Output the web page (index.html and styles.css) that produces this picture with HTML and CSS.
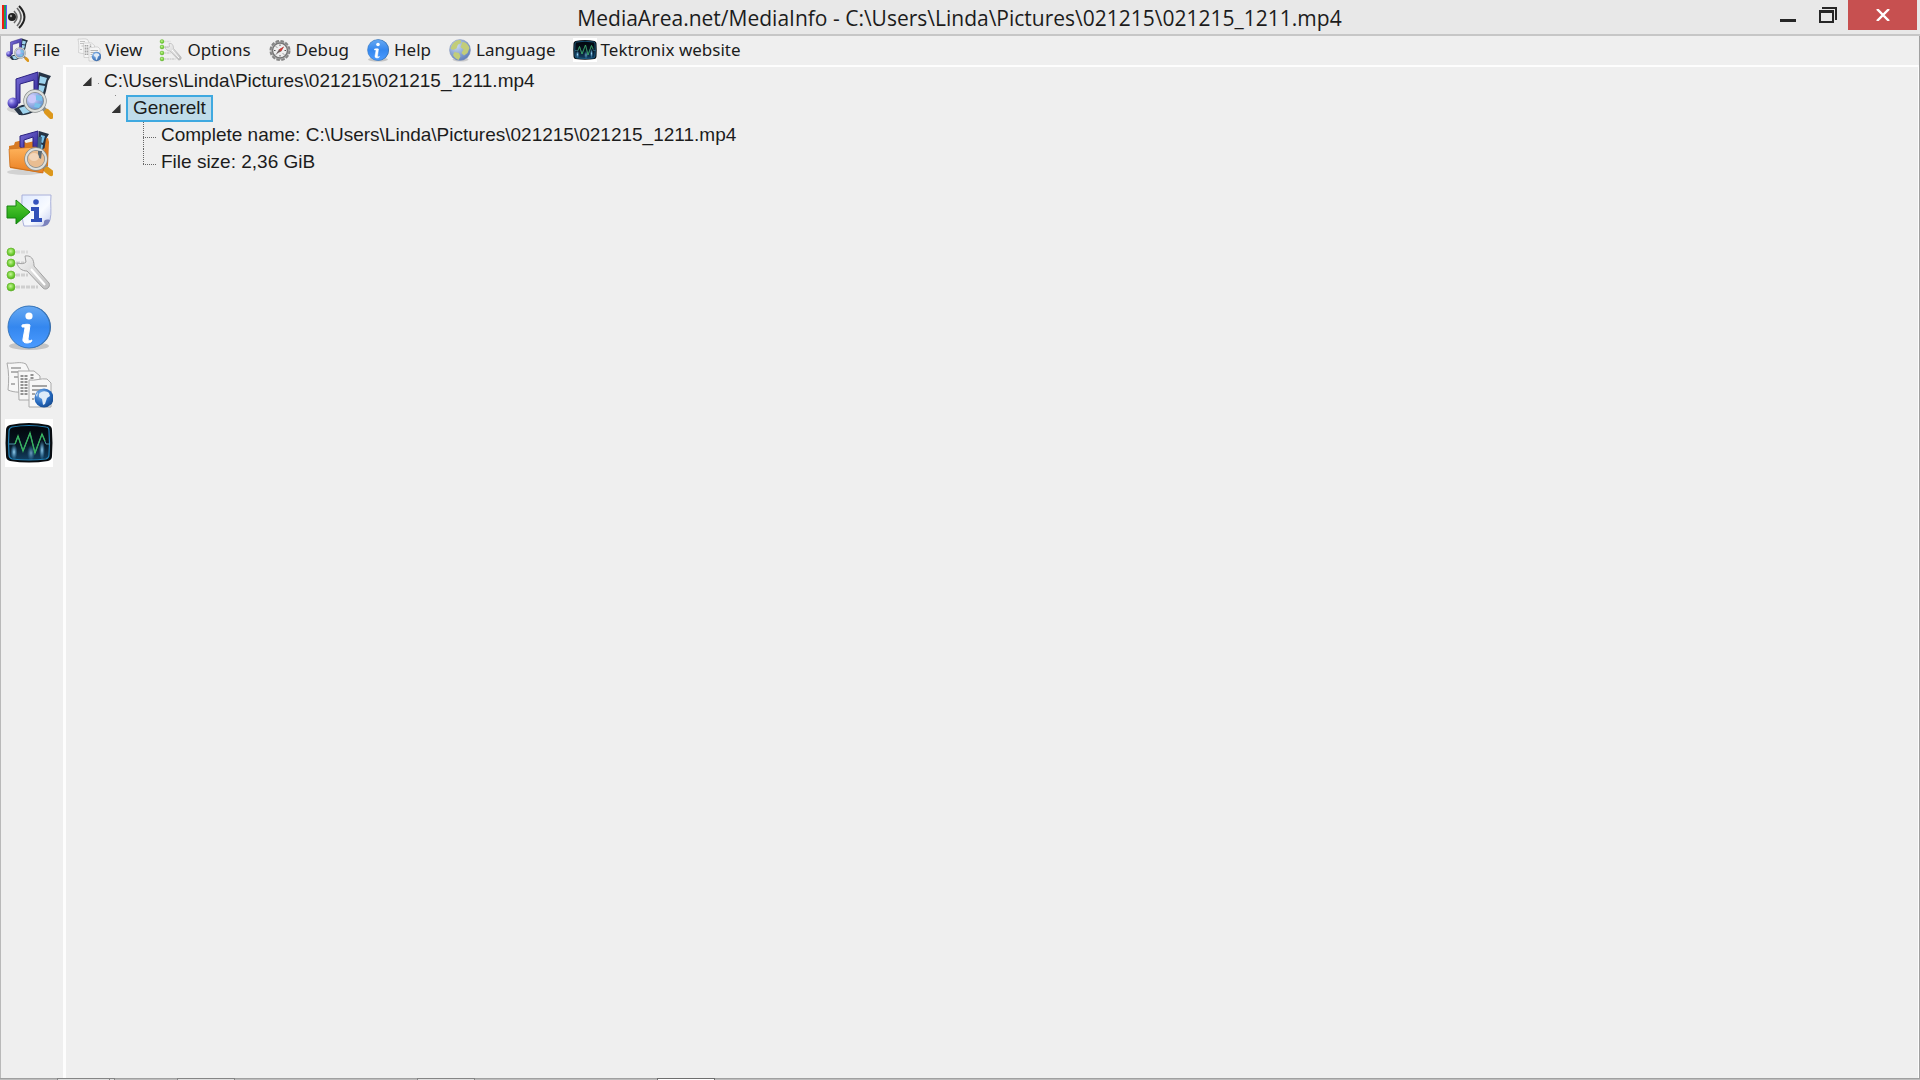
FILE: index.html
```
<!DOCTYPE html>
<html lang="en">
<head>
    <meta charset="UTF-8">
    <meta name="viewport" content="width=device-width, initial-scale=1.0">
    <title>MediaArea.net/MediaInfo</title>
    <link rel="stylesheet" href="styles.css">
</head>
<body>
    <!-- shared icons, used by both the menu and the toolbar -->
    <svg class="sprite" aria-hidden="true">
        <defs>
            <linearGradient id="purple" x1="0" y1="0" x2="1" y2="1">
                <stop offset="0" stop-color="#7b6fd8"/><stop offset="1" stop-color="#2f2694"/>
            </linearGradient>
            <radialGradient id="ball" cx="0.35" cy="0.3" r="0.7">
                <stop offset="0" stop-color="#c9c2ff"/><stop offset="0.5" stop-color="#6558cf"/><stop offset="1" stop-color="#2a2085"/>
            </radialGradient>
            <linearGradient id="orange" x1="0" y1="0" x2="0" y2="1">
                <stop offset="0" stop-color="#ffb45c"/><stop offset="1" stop-color="#ea7f22"/>
            </linearGradient>
            <radialGradient id="lens" cx="0.35" cy="0.35" r="0.75">
                <stop offset="0" stop-color="#dcdcff"/><stop offset="0.5" stop-color="#94a9e2"/><stop offset="1" stop-color="#4c8cc0"/>
            </radialGradient>
            <linearGradient id="green" x1="0" y1="0" x2="0" y2="1">
                <stop offset="0" stop-color="#5bd136"/><stop offset="1" stop-color="#149a0c"/>
            </linearGradient>
            <radialGradient id="dot" cx="0.45" cy="0.4" r="0.65">
                <stop offset="0" stop-color="#caf69c"/><stop offset="0.6" stop-color="#71cf35"/><stop offset="1" stop-color="#4ba51b"/>
            </radialGradient>
            <linearGradient id="steel" x1="0" y1="0" x2="1" y2="1">
                <stop offset="0" stop-color="#f7f7f7"/><stop offset="1" stop-color="#bdbdbd"/>
            </linearGradient>
            <linearGradient id="blue" x1="0" y1="0" x2="0" y2="1">
                <stop offset="0" stop-color="#67a9f2"/><stop offset="0.5" stop-color="#3487ef"/><stop offset="1" stop-color="#4b9bff"/>
            </linearGradient>
            <linearGradient id="page" x1="0" y1="0" x2="1" y2="1">
                <stop offset="0" stop-color="#dfe9ff"/><stop offset="0.6" stop-color="#f8fbff"/><stop offset="1" stop-color="#c4cdef"/>
            </linearGradient>
            <radialGradient id="globe" cx="0.35" cy="0.3" r="0.8">
                <stop offset="0" stop-color="#7db4ee"/><stop offset="0.6" stop-color="#2568bd"/><stop offset="1" stop-color="#144687"/>
            </radialGradient>
            <radialGradient id="earth" cx="0.35" cy="0.3" r="0.8">
                <stop offset="0" stop-color="#c8daf4"/><stop offset="1" stop-color="#5878b5"/>
            </radialGradient>
            <linearGradient id="screen" x1="0" y1="0" x2="0" y2="1">
                <stop offset="0" stop-color="#02060c"/><stop offset="0.5" stop-color="#06131f"/><stop offset="1" stop-color="#123f61"/>
            </linearGradient>
            <radialGradient id="glow">
                <stop offset="0" stop-color="#9bd4f2"/><stop offset="1" stop-color="#3f9bd6" stop-opacity="0"/>
            </radialGradient>
        </defs>

        <symbol id="icon-file" viewBox="0 0 48 48">
            <ellipse cx="15" cy="38" rx="13" ry="4" fill="#000" opacity="0.12"/>
            <path d="M34 1l12 4-3 5-2 10-3 10c-5 11-15 15-24 14l-5-6 8-4c7 0 12-4 13-10z" fill="#263445"/>
            <path d="M35 5l7 2-2 6-6-1zM34 14l6 1-2 7-5-1zM14 37l7-2 4 6-7 2z" fill="#9fd4ee"/>
            <path d="M11 8l22-7v22h-4V9l-14 4v19h-4z" fill="url(#purple)" stroke="#2a2180"/>
            <circle cx="8" cy="32" r="5.5" fill="url(#ball)"/>
            <path d="M38 37l4 4" stroke="#8b8b86" stroke-width="4"/>
            <path d="M42 41l4 4" stroke="#dc971b" stroke-width="6" stroke-linecap="round"/>
            <circle cx="30" cy="30" r="10" fill="url(#lens)" stroke="#858988" stroke-width="3.4"/>
            <circle cx="30" cy="30" r="10" fill="none" stroke="#dde0de" stroke-width="2"/>
            <path d="M31 24l6 1v5l-6-1zM30 32l6 1-2 4-5-1z" fill="#79c2ea"/>
            <circle cx="27" cy="28" r="4" fill="#cac8fa"/>
        </symbol>

        <symbol id="icon-folder" viewBox="0 0 48 48">
            <ellipse cx="20" cy="43" rx="18" ry="3" fill="#000" opacity="0.12"/>
            <path d="M4 17l5-1 1-3 8-2 3 3 22-5 1 4-1 24-6 7-32-5z" fill="#d77a22"/>
            <path d="M15 18V7l18-5v18h-5V8l-9 3v9z" fill="url(#purple)" stroke="#2a2180"/>
            <path d="M34 2l10 3-3 5-3 19-6-2z" fill="#263445"/>
            <path d="M36 6l4 1-2 7-3-1zM35 15l3 1-1 6-3-1z" fill="#79c2ea"/>
            <path d="M4 20l27-2 5 4 4-3-2 25-33-6z" fill="url(#orange)" stroke="#c76b18" stroke-width="0.7"/>
            <path d="M33 8h4l-2 18h-3z" fill="#42657f"/>
            <path d="M39 37l4 4" stroke="#8b8b86" stroke-width="4"/>
            <path d="M42 41l4 3" stroke="#dc971b" stroke-width="6" stroke-linecap="round"/>
            <circle cx="31" cy="30" r="10" fill="#e9bd91" stroke="#858988" stroke-width="3.4"/>
            <circle cx="31" cy="30" r="10" fill="none" stroke="#dde0de" stroke-width="2"/>
            <path d="M33 22h4l-1 8-3-2z" fill="#596873"/>
            <ellipse cx="29" cy="28" rx="5" ry="4" fill="#f3d6ba"/>
        </symbol>

        <symbol id="icon-export" viewBox="0 0 48 48">
            <path d="M17 8h29c-1 9 1 18-1 25-2 4-5 6-9 6H19c-3-10-2-20-2-31z" fill="url(#page)" stroke="#a9b0da"/>
            <path d="M45 33c-4-1-6 0-6 2 0 2-1 4-4 4 6 1 9-1 10-6z" fill="#7c83bd"/>
            <path d="M2 19h9v-6l14 12-14 12v-6H2z" fill="url(#green)" stroke="#168211"/>
            <circle cx="31" cy="15" r="2.8" fill="#3553bd"/>
            <path d="M26 20h8v11h3v4H26v-3h3v-8h-3z" fill="#3150b9"/>
        </symbol>

        <symbol id="icon-options" viewBox="0 0 48 48">
            <g stroke="#cfcfcf" stroke-width="3" stroke-dasharray="4 1">
                <path d="M11 7h12" opacity="0.6"/><path d="M11 18h8M11 30h12M11 42h22"/>
            </g>
            <path d="M12 18c4 1 7 1 9-1l-1-6c6-1 9 3 9 10l15 17c2 4-3 8-6 5L22 26c-5 0-9-3-10-8z" fill="url(#steel)" stroke="#a2a2a2"/>
            <path d="M26 24l14 16" stroke="#fff" stroke-width="2"/>
            <g fill="url(#dot)" stroke="#64b32e" stroke-width="0.7">
                <circle cx="6" cy="7" r="4"/><circle cx="6" cy="18" r="4"/><circle cx="6" cy="30" r="4"/><circle cx="6" cy="42" r="4"/>
            </g>
        </symbol>

        <symbol id="icon-info" viewBox="0 0 48 48">
            <ellipse cx="24" cy="43" rx="20" ry="4" fill="#000" opacity="0.18"/>
            <circle cx="25" cy="24" r="21" fill="#30639f"/>
            <circle cx="24" cy="24" r="21" fill="url(#blue)" stroke="#3978bd"/>
            <circle cx="24" cy="13" r="3.6" fill="#fff"/>
            <path d="M17 22c4-1 7-1 8 0l-2 14c0 2 2 2 4 1l-1 2c-4 2-9 1-8-3l2-11c0-1-1-1-3-1z" fill="#fff" stroke="#fff"/>
        </symbol>

        <symbol id="icon-view" viewBox="0 0 48 48">
            <g fill="#f7f7f7" stroke="#a9a9a9">
                <path d="M2 2c7 1 13-2 19 1l3 6-1 22c-7 0-13 1-20-2 1-9 1-18-1-27z"/>
                <path d="M13 10h16l6 5v24H14z"/>
                <path d="M24 19c6 1 12-2 18-1l4 4v24H24z"/>
            </g>
            <path d="M6 7h10M6 11h7M9 16h4M6 23h4" stroke="#9c9c9c" stroke-width="1.4"/>
            <path d="M17 14v21M21 14v21M27 13v6" stroke="#929292" stroke-width="3" stroke-dasharray="2 1"/>
            <path d="M27 25h15M27 29h10M27 33h3M27 38h2" stroke="#8b8b8b" stroke-width="1.5"/>
            <circle cx="39" cy="37" r="9.5" fill="url(#globe)"/>
            <path d="M34 33c3-4 8-3 10-1l1 3-3 2-2 6-2 1-1-6-3-2z" fill="#deebf8"/>
            <path d="M31 34l2-3-1 5z" fill="#deebf8"/>
        </symbol>

        <symbol id="icon-tektronix" viewBox="0 0 48 48">
            <path d="M0 0h48v48H0z" fill="#fff"/>
            <path d="M5 6q19-4 38 0 4 1 4 5 1 13 0 26 0 4-4 5-19 3-38 0-4-1-4-5-1-13 0-26 0-4 4-5z" fill="#080c10"/>
            <path d="M7 8q17-3 34 0 3 0 3 4 1 12 0 24 0 3-3 4-17 2-34 0-3-1-3-4-1-12 0-24 0-3 3-4z" fill="url(#screen)" stroke="#2280b5" stroke-width="1.2"/>
            <ellipse cx="9" cy="33" rx="3.5" ry="8" fill="url(#glow)"/>
            <ellipse cx="26" cy="34" rx="4" ry="8" fill="url(#glow)" opacity="0.7"/>
            <ellipse cx="37" cy="31" rx="3" ry="10" fill="url(#glow)"/>
            <path d="M4 25h6l3-8 5 15 7-18 5 20 7-19 4 10h4" fill="none" stroke="#4d95a9" stroke-width="1"/>
            <path d="M10 25l3-8 5 15 7-18 5 20 7-19 3 7" fill="none" stroke="#37b45a" stroke-width="1.3"/>
        </symbol>

        <symbol id="icon-debug" viewBox="0 0 48 48">
            <circle cx="24" cy="25" r="19" fill="#bdbdbd" stroke="#858585" stroke-width="4" stroke-dasharray="7 3"/>
            <circle cx="24" cy="25" r="15" fill="#eee" stroke="#777" stroke-width="3"/>
            <path d="M24 13v3M24 34v3M12 25h3M33 25h3M16 17l2 2M30 31l2 2M16 33l2-2" stroke="#555" stroke-width="2"/>
            <path d="M16 32l6-9 10-6-6 10z" fill="#6c6060"/>
            <path d="M22 23l10-6-6 10z" fill="#d83b36"/>
        </symbol>

        <symbol id="icon-language" viewBox="0 0 48 48">
            <ellipse cx="25" cy="43" rx="16" ry="4" fill="#000" opacity="0.15"/>
            <circle cx="24" cy="24" r="21" fill="url(#earth)" stroke="#8797b8"/>
            <path d="M8 14c4-7 10-10 17-10l2 6-7 3-3 8-7 3-5-3zM29 8c5-1 12 5 14 12l-4 10-7 5-5-5 4-7-6-5zM13 28l9 2 3 7-4 7c-5-2-9-6-11-10z" fill="#c2cd79"/>
        </symbol>
    </svg>

    <header class="titlebar">
        <svg class="app-icon" viewBox="0 0 24 24" aria-hidden="true">
            <path d="M0 0h2v24H0z" fill="#f01c10"/>
            <path d="M2 0h2v24H2z" fill="#1e9a62"/>
            <path d="M4 0h1v24H4z" fill="#5b55ff"/>
            <circle cx="10" cy="12" r="4" fill="#222"/>
            <circle cx="9" cy="11" r="1.2" fill="#999"/>
            <path d="M12 6q6 6 0 12M15 3q8 9 0 18" fill="none" stroke="#666" stroke-width="1.6"/>
            <path d="M17 1q11 11 0 22" fill="none" stroke="#222" stroke-width="2"/>
        </svg>
        <h1>MediaArea.net/MediaInfo - C:\Users\Linda\Pictures\021215\021215_1211.mp4</h1>
        <div class="window-buttons">
            <button type="button" aria-label="Minimize">
                <svg width="18" height="18" viewBox="0 0 18 18"><path d="M1 13h16v3H1z" fill="#262626"/></svg>
            </button>
            <button type="button" aria-label="Restore">
                <svg width="18" height="18" viewBox="0 0 18 18"><path d="M3 1h15v13h-2V3H3zM0 4h15v13H0zM2 7v8h11V7z" fill="#262626" fill-rule="evenodd"/></svg>
            </button>
            <button type="button" class="close" aria-label="Close">
                <svg width="14" height="12" viewBox="0 0 14 12"><path d="M1 0l12 12M13 0L1 12" stroke="#fff" stroke-width="2.4"/></svg>
            </button>
        </div>
    </header>

    <div class="window">
        <nav class="menubar">
            <button type="button"><svg><use href="#icon-file"/></svg>File</button>
            <button type="button"><svg class="faded"><use href="#icon-view"/></svg>View</button>
            <button type="button"><svg><use href="#icon-options"/></svg>Options</button>
            <button type="button"><svg><use href="#icon-debug"/></svg>Debug</button>
            <button type="button"><svg><use href="#icon-info"/></svg>Help</button>
            <button type="button"><svg><use href="#icon-language"/></svg>Language</button>
            <button type="button"><svg><use href="#icon-tektronix"/></svg>Tektronix website</button>
        </nav>

        <div class="content">
            <aside class="toolbar">
                <button type="button" aria-label="Open file"><svg><use href="#icon-file"/></svg></button>
                <button type="button" aria-label="Open folder"><svg><use href="#icon-folder"/></svg></button>
                <button type="button" aria-label="Export"><svg><use href="#icon-export"/></svg></button>
                <button type="button" aria-label="Options"><svg><use href="#icon-options"/></svg></button>
                <button type="button" aria-label="About"><svg><use href="#icon-info"/></svg></button>
                <button type="button" aria-label="View"><svg><use href="#icon-view"/></svg></button>
                <button type="button" aria-label="Tektronix website"><svg><use href="#icon-tektronix"/></svg></button>
            </aside>

            <main class="tree">
                <ul>
                    <li>
                        <div class="row">
                            <button type="button" class="expander" aria-label="Collapse"></button>
                            <span class="label root">C:\Users\Linda\Pictures\021215\021215_1211.mp4</span>
                        </div>
                        <ul>
                            <li>
                                <div class="row">
                                    <button type="button" class="expander child" aria-label="Collapse"></button>
                                    <span class="label selected">Generelt</span>
                                </div>
                                <ul class="leaves">
                                    <li class="row"><span class="label">Complete name: C:\Users\Linda\Pictures\021215\021215_1211.mp4</span></li>
                                    <li class="row"><span class="label">File size: 2,36 GiB</span></li>
                                </ul>
                            </li>
                        </ul>
                    </li>
                </ul>
            </main>
        </div>
    </div>

    <!-- top edge of the taskbar -->
    <footer class="taskbar">
        <span class="task stacked"></span>
        <span class="task"></span>
        <span class="task wide-gap"></span>
        <span class="task active wide-gap"></span>
    </footer>
</body>
</html>
```
FILE: styles.css
```
* {
    box-sizing: border-box;
}
body {
    margin: 0;
    min-height: 100vh;
    display: flex;
    flex-direction: column;
    background-color: #efefef;
    color: #1c1c1c;
    font-family: 'Liberation Sans', Arial, sans-serif;
    font-size: 19px;
}
button {
    padding: 0;
    border: none;
    background: none;
    color: inherit;
    font: inherit;
}
ul {
    list-style: none;
    margin: 0;
    padding: 0;
}
.sprite {
    position: absolute;
    width: 0;
    height: 0;
}

/* title bar */
.titlebar {
    display: grid;
    grid-template-columns: 1fr auto 1fr;
    align-items: center;
    height: 36px;
    padding: 0 3px 0 2px;
    background-color: #e8e8e8;
    border-bottom: 2px solid #c6c6c6;
}
.app-icon {
    width: 24px;
    height: 24px;
}
.titlebar h1 {
    margin: 0;
    padding-top: 2px;
    font-family: 'Open Sans', sans-serif;
    font-size: 21px;
    font-weight: normal;
    line-height: 32px;
    white-space: nowrap;
}
.window-buttons {
    display: flex;
    justify-self: end;
    align-self: start;
}
.window-buttons button {
    display: flex;
    align-items: center;
    justify-content: center;
    width: 40px;
    height: 30px;
}
.window-buttons .close {
    width: 69px;
    background-color: #c75050;
}

.window {
    flex: 1;
    display: flex;
    flex-direction: column;
    border-left: 1px solid #b9b9b9;
    border-right: 1px solid #a0a0a0;
}

/* menu */
.menubar {
    display: flex;
    gap: 17px;
    height: 29px;
    padding-left: 4px;
}
.menubar button {
    display: flex;
    align-items: center;
    gap: 4px;
    padding-bottom: 1px;
    font-family: 'Noto Sans', sans-serif;
    font-size: 17px;
    line-height: 26px;
    white-space: nowrap;
}
.menubar svg {
    width: 24px;
    height: 24px;
}
.menubar .faded {
    opacity: 0.8;
}

.content {
    flex: 1;
    display: flex;
}
.toolbar {
    display: flex;
    flex-direction: column;
    gap: 10px;
    width: 62px;
    padding: 6px 4px;
}
.toolbar button {
    width: 48px;
    height: 48px;
}
.toolbar svg {
    display: block;
    width: 48px;
    height: 48px;
}

/* file tree */
.tree {
    flex: 1;
    padding: 1px 0 0 11px;
    border: solid #fdfdfd;
    border-width: 2px 1px 0 3px;
}
.row {
    display: flex;
    height: 27px;
}
.label {
    padding: 0 7px;
    line-height: 25px;
    white-space: nowrap;
}
.root {
    background: linear-gradient(#888, #888) 1px 15px / 1px 1px no-repeat;
}
.selected {
    padding: 0 5px;
    border: 2px solid #3fa9e0;
    background-color: #bfdcea;
    line-height: 21px;
}
.tree ul ul {
    margin-left: 29px;
}
.expander {
    width: 20px;
    display: flex;
    align-items: center;
    justify-content: center;
}
.expander.child {
    background: linear-gradient(#888, #888) 9px 0 / 1px 1px no-repeat;
}
.expander::before {
    content: '';
    width: 9px;
    height: 9px;
    background-color: #333;
    clip-path: polygon(100% 0, 100% 100%, 0 100%);
}
.tree .leaves {
    margin-left: 37px;
}
.leaves .row {
    padding-left: 12px;
    background: repeating-linear-gradient(to right, #666 0 1px, transparent 1px 2px) 0 15px / 13px 1px no-repeat,
                repeating-linear-gradient(to bottom, #666 0 1px, transparent 1px 2px) 0 0 / 1px 100% no-repeat;
}
.leaves .row:last-child {
    background-size: 13px 1px, 1px 15px;
}
.leaves .label {
    padding-left: 6px;
}

/* taskbar */
.taskbar {
    display: flex;
    height: 2px;
    padding-left: 57px;
    gap: 62px;
    background-color: #bcbcbc;
    border-top: 1px solid #a0a0a0;
}
.task {
    width: 58px;
    height: 2px;
    margin-top: -1px;
    background-color: #dedede;
    border: 1px solid #858585;
    border-bottom: none;
}
.task.stacked {
    background-image: linear-gradient(#858585, #858585);
    background-position: 51px 0;
    background-size: 1px 2px;
    background-repeat: no-repeat;
}
.task.wide-gap {
    margin-left: 120px;
}
.task.active {
    background-color: #fff;
    border-color: #6e6e6e;
}
```
